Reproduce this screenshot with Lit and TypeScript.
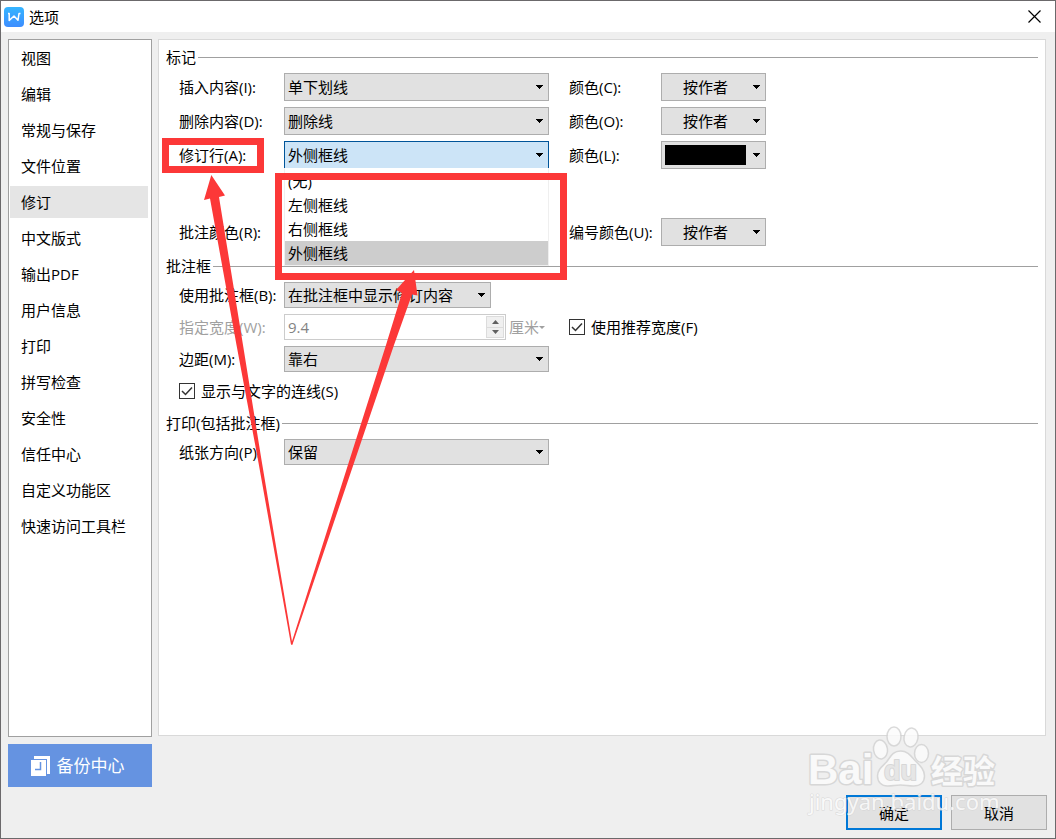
import { LitElement, html, css, svg, nothing } from "lit";
import { customElement } from "lit/decorators.js";
import { classMap } from "lit/directives/class-map.js";

const arrow = html`<svg class="arrow" width="7" height="4" viewBox="0 0 7 4" aria-hidden="true">
  <path d="M0 0h7v1h-1v1h-1v1h-1v1h-1v-1h-1v-1h-1v-1h-1z" fill="currentColor" shape-rendering="crispEdges" />
</svg>`;

const baseStyles = css`
  *, *::before, *::after { box-sizing: border-box; }
  :host {
    font-family: "Open Sans", "Noto Sans CJK SC", sans-serif;
    font-size: 15px;
    line-height: 20px;
    color: #000;
  }
  button, select, input { font: inherit; color: inherit; margin: 0; border-radius: 0; }
`;

@customElement("tick-box")
export class TickBox extends LitElement {
  static styles = [
    baseStyles,
    css`
      :host { display: flex; align-items: center; }
      .tick { display: flex; align-items: center; gap: 6px; }
      .box { display: grid; }
      .input, .mark { grid-area: 1 / 1; width: 16px; height: 16px; }
      .input { appearance: none; border: 1px solid #333; background: #fff; }
      .mark { pointer-events: none; visibility: hidden; }
      .input:checked + .mark { visibility: visible; }
    `,
  ];

  render() {
    return html`<label class="tick">
      <span class="box">
        <input class="input" type="checkbox" checked />
        <svg class="mark" viewBox="0 0 16 16" aria-hidden="true">
          <path d="M3 8l3.500 3.500L13 4.500" fill="none" stroke="#333" stroke-width="1.500" />
        </svg>
      </span>
      <slot></slot>
    </label>`;
  }
}

const pages = [
  "视图", "编辑", "常规与保存", "文件位置", "修订", "中文版式", "输出PDF",
  "用户信息", "打印", "拼写检查", "安全性", "信任中心", "自定义功能区", "快速访问工具栏",
];

const paw = svg`
  <g fill="#fcfcfc" stroke="#d2d2d2" stroke-width="1.500">
    <ellipse cx="89" cy="10.500" rx="7" ry="9.500" />
    <ellipse cx="106" cy="11.500" rx="7" ry="9.500" transform="rotate(10 106 11.500)" />
    <ellipse cx="75.500" cy="23.500" rx="7" ry="9.500" transform="rotate(-8 75.500 23.500)" />
    <ellipse cx="116.500" cy="27.500" rx="7" ry="9" />
    <path d="M95.500 25c-8 0-10 6-14 11-5 5-9 8-9 14 0 6 4 10 10 10 5 0 8-1 13-1s8 1 13 1c7 0 11-4 11-10 0-6-4-10-8-14-5-5-8-11-16-11z" />
  </g>`;

@customElement("app-root")
export class AppRoot extends LitElement {
  static styles = [
    baseStyles,
    css`
      :host { display: block; }
      .window {
        position: relative;
        display: flex;
        flex-direction: column;
        min-height: 100vh;
        background: #efefef;
        border: 1px solid #6b696b;
        overflow: hidden;
      }
      .titlebar {
        display: flex;
        align-items: center;
        gap: 5px;
        height: 31px;
        padding: 0 12px 0 3px;
        background: #fff;
      }
      .title { flex: 1; margin: 0; font-size: 15px; font-weight: 400; }
      .close { display: flex; padding: 2px; border: 0; background: none; }
      .body {
        flex: 1;
        display: grid;
        grid-template-columns: 144px 1fr;
        gap: 6px;
        padding: 7px 8px 8px 7px;
      }
      .side { display: flex; flex-direction: column; gap: 7px; padding-bottom: 43px; }
      .pages {
        flex: 1;
        display: flex;
        flex-direction: column;
        gap: 4px;
        padding: 2px 3px 2px 1px;
        background: #fff;
        border: 1px solid #a0a0a0;
      }
      .page { height: 32px; line-height: 32px; padding-left: 11px; color: #000; text-decoration: none; }
      .current { background: #e5e5e5; }
      .backup {
        display: flex;
        align-items: center;
        justify-content: center;
        gap: 7px;
        height: 43px;
        padding: 0 5px 0 0;
        border: 0;
        background: #6593e1;
        color: #fff;
        font-size: 17px;
      }
      .main { display: flex; flex-direction: column; }
      .panel {
        flex: 1;
        display: flex;
        flex-direction: column;
        gap: 10px;
        margin-right: 1px;
        padding: 7px;
        background: #fff;
        border: 1px solid #d9d9d9;
      }
      .section { display: flex; flex-direction: column; gap: 6px; }
      .legend { display: flex; align-items: center; gap: 2px; margin: 0; font-size: 15px; font-weight: 400; height: 20px; }
      .legend::after { content: ""; flex: 1; height: 1px; background: #a0a0a0; }
      .row {
        display: grid;
        grid-template-columns: 105px 265px 112px 105px;
        align-items: center;
        height: 26px;
        padding-left: 13px;
      }
      .tall { height: 28px; }
      .apart { margin-top: 43px; }
      .check { display: flex; height: 25px; }
      .second { padding-left: 20px; }
      .wide { grid-column: 3 / 5; padding-left: 20px; }
      .muted { color: #a0a0a0; }

      .combo { display: grid; position: relative; height: 100%; }
      .narrow { width: 207px; }
      .field, .combo > .arrow { grid-area: 1 / 1; }
      .field {
        appearance: none;
        width: 100%;
        height: 100%;
        padding: 0 20px 0 3px;
        background: #e1e1e1;
        border: 1px solid #adadad;
        outline: none;
      }
      .color { padding-left: 21px; }
      .open { background: #cce4f7; border-color: #005499; }
      .combo > .arrow { align-self: center; justify-self: end; margin-right: 6px; pointer-events: none; }
      .list {
        position: absolute;
        z-index: 2;
        top: 27px;
        left: 0;
        right: 0;
        margin: 0;
        padding: 1px 0 0;
        list-style: none;
        background: #fff;
        border: 1px solid #efefef;
        border-top: 0;
      }
      .option { height: 24px; line-height: 24px; padding-left: 3px; }
      .selected { background: #cdcdcd; }

      .swatch-button {
        display: flex;
        align-items: center;
        justify-content: space-between;
        height: 100%;
        padding: 0 5px 0 3px;
        background: #e1e1e1;
        border: 1px solid #adadad;
      }
      .swatch { width: 81px; height: 20px; background: #000; }
      .measure { display: flex; align-items: center; gap: 3px; height: 100%; }
      .spin {
        display: flex;
        width: 222px;
        height: 100%;
        padding: 1px;
        background: #fff;
        border: 1px solid #ccc;
      }
      .number {
        flex: 1;
        min-width: 0;
        padding: 0 0 0 2px;
        border: 0;
        background: none;
        color: #838383;
        appearance: textfield;
      }
      .number::-webkit-inner-spin-button { appearance: none; margin: 0; }
      .steps { display: flex; flex-direction: column; width: 18px; background: #f0f0f0; border: 1px solid #dcdcdc; }
      .step {
        flex: 1;
        display: flex;
        align-items: center;
        justify-content: center;
        padding: 0;
        border: 0;
        background: #f0f0f0;
        color: #606060;
      }
      .step + .step { border-top: 1px solid #dcdcdc; }
      .unit { display: flex; align-items: center; padding: 0; border: 0; background: none; color: #a0a0a0; }
      .footer { display: flex; justify-content: flex-end; gap: 9px; padding-top: 59px; }
      .action { width: 96px; height: 35px; padding: 0; background: #e1e1e1; border: 1px solid #adadad; }
      .primary { border: 2px solid #0078d7; }
      .marks { position: absolute; z-index: 3; top: 0; left: 0; pointer-events: none; }
      .watermark { position: absolute; z-index: 3; right: 50px; bottom: 18px; opacity: 0.8; pointer-events: none; }
      .brand { font: 700 42px "Liberation Sans", sans-serif; }
      .brand-cjk { font: 700 32px "Noto Sans CJK SC", sans-serif; }
      .du { font: 700 27px "Liberation Sans", sans-serif; fill: #e4e4e4; }
      .site { font: 400 22px "Noto Sans", sans-serif; }
    `,
  ];

  /** Drop-down field; its list is drawn when there is more than one option. */
  private combo(id: string, value: string, options = [value], extra = "", color = false) {
    const open = options.length > 1;
    return html`<div class="combo ${extra}">
      <select id=${id} class=${classMap({ field: true, open, color })}>
        ${options.map((o) => html`<option ?selected=${o === value}>${o}</option>`)}
      </select>
      ${arrow}
      ${open
        ? html`<ul class="list" role="listbox">
            ${options.map(
              (o) => html`<li
                role="option"
                aria-selected=${o === value ? "true" : "false"}
                class=${classMap({ option: true, selected: o === value })}
              >${o}</li>`
            )}
          </ul>`
        : nothing}
    </div>`;
  }

  private line(label: string, id: string, value: string, options = [value], extra = "") {
    return html`<label for=${id}>${label}</label>${this.combo(id, value, options, extra)}`;
  }

  private authorColor(label: string, id: string) {
    return html`<label class="second" for=${id}>${label}</label>${this.combo(id, "按作者", ["按作者"], "", true)}`;
  }

  render() {
    return html`
      <div class="window">
        <header class="titlebar">
          <svg width="20" height="20" viewBox="0 0 20 20" aria-hidden="true">
            <defs>
              <linearGradient id="g" x2="0" y2="1"><stop stop-color="#35b5ff" /><stop offset="1" stop-color="#3d8dff" /></linearGradient>
            </defs>
            <rect width="20" height="20" rx="4" fill="url(#g)" />
            <path d="M4 6.500h1.200v7L10 9l4 4.200 1-6.700h1.500" fill="none" stroke="#fff" stroke-width="1.500" stroke-linejoin="round" />
          </svg>
          <h1 class="title">选项</h1>
          <button class="close" aria-label="关闭">
            <svg width="13" height="13" viewBox="0 0 13 13"><path d="M.5.5l12 12M12.500.5l-12 12" stroke="#000" stroke-width="1.200" /></svg>
          </button>
        </header>
        <div class="body">
          <div class="side">
            <nav class="pages">
              ${pages.map((p) => html`<a href="#" class=${classMap({ page: true, current: p === "修订" })}>${p}</a>`)}
            </nav>
            <button class="backup">
              <svg width="19" height="20" viewBox="0 0 19 20" aria-hidden="true">
                <path d="M3 0h16v18h-3V3H3z" fill="#fff" />
                <path d="M0 4h15v16H0z" fill="#fff" />
                <path d="M9.500 6v7.500H4" fill="none" stroke="#6593e1" stroke-width="1.500" />
              </svg>
              备份中心
            </button>
          </div>
          <main class="main">
            <div class="panel">
              <section class="section">
                <h2 class="legend">标记</h2>
                <div class="row tall">
                  ${this.line("插入内容(I):", "insert", "单下划线")} ${this.authorColor("颜色(C):", "insert-color")}
                </div>
                <div class="row tall">
                  ${this.line("删除内容(D):", "delete", "删除线")} ${this.authorColor("颜色(O):", "delete-color")}
                </div>
                <div class="row tall">
                  ${this.line("修订行(A):", "lines", "外侧框线", ["(无)", "左侧框线", "右侧框线", "外侧框线"])}
                  <label class="second" for="lines-color">颜色(L):</label>
                  <button id="lines-color" class="swatch-button"><span class="swatch"></span>${arrow}</button>
                </div>
                <div class="row tall apart">
                  ${this.line("批注颜色(R):", "comment-color", "按作者")} ${this.authorColor("编号颜色(U):", "number-color")}
                </div>
              </section>
              <section class="section">
                <h2 class="legend">批注框</h2>
                <div class="row">
                  ${this.line("使用批注框(B):", "balloons", "在批注框中显示修订内容", ["在批注框中显示修订内容"], "narrow")}
                </div>
                <div class="row">
                  <label class="muted" for="width">指定宽度(W):</label>
                  <div class="measure">
                    <div class="spin">
                      <input id="width" class="number" type="number" step="0.1" value="9.4" disabled />
                      <span class="steps">
                        <button class="step" disabled aria-label="增加"><svg width="7" height="4" viewBox="0 0 7 4"><path d="M3.500 0L7 4H0z" fill="currentColor" /></svg></button>
                        <button class="step" disabled aria-label="减少"><svg width="7" height="4" viewBox="0 0 7 4"><path d="M3.500 4L7 0H0z" fill="currentColor" /></svg></button>
                      </span>
                    </div>
                    <button class="unit" disabled>厘米<svg width="6" height="3" viewBox="0 0 6 3" aria-hidden="true"><path d="M0 0h6L3 3z" fill="currentColor" /></svg></button>
                  </div>
                  <tick-box class="wide">使用推荐宽度(F)</tick-box>
                </div>
                <div class="row">${this.line("边距(M):", "margin", "靠右")}</div>
                <div class="row check"><tick-box>显示与文字的连线(S)</tick-box></div>
              </section>
              <section class="section">
                <h2 class="legend">打印(包括批注框)</h2>
                <div class="row">${this.line("纸张方向(P):", "paper", "保留")}</div>
              </section>
            </div>
            <footer class="footer">
              <button class="action primary">确定</button>
              <button class="action">取消</button>
            </footer>
          </main>
        </div>
        <svg class="marks" width="600" height="660" viewBox="1 1 600 660" aria-hidden="true">
          <g fill="none" stroke="#fc3838" stroke-width="7">
            <rect x="165.500" y="141.500" width="95" height="28" />
            <rect x="278.500" y="176.500" width="285" height="100" />
          </g>
          <g fill="#fc3838">
            <path d="M211.300 175L225 195.500L219 197L243 345L261.500 460L292.500 644.500L291 644.500L258 460L236.500 345L210 198.500L204 200z" />
            <path d="M414 270L417.500 295.500L412 294.500L394 345L355 460L292.500 644.500L291 644.500L349.500 460L386 345L402 293L396 290z" />
          </g>
        </svg>
        <svg class="watermark" width="200" height="94" viewBox="0 0 200 94" aria-hidden="true">
          ${paw}
          <g fill="#fcfcfc" stroke="#d2d2d2" stroke-width="3" paint-order="stroke" stroke-linejoin="round">
            <text class="brand" x="3" y="58">Bai</text>
            <text class="du" x="79" y="54" stroke-width="2">du</text>
            <text class="brand-cjk" x="126" y="57">经验</text>
            <text class="site" x="4" y="84" stroke-width="1">jingyan.baidu.com</text>
          </g>
        </svg>
      </div>
    `;
  }
}
